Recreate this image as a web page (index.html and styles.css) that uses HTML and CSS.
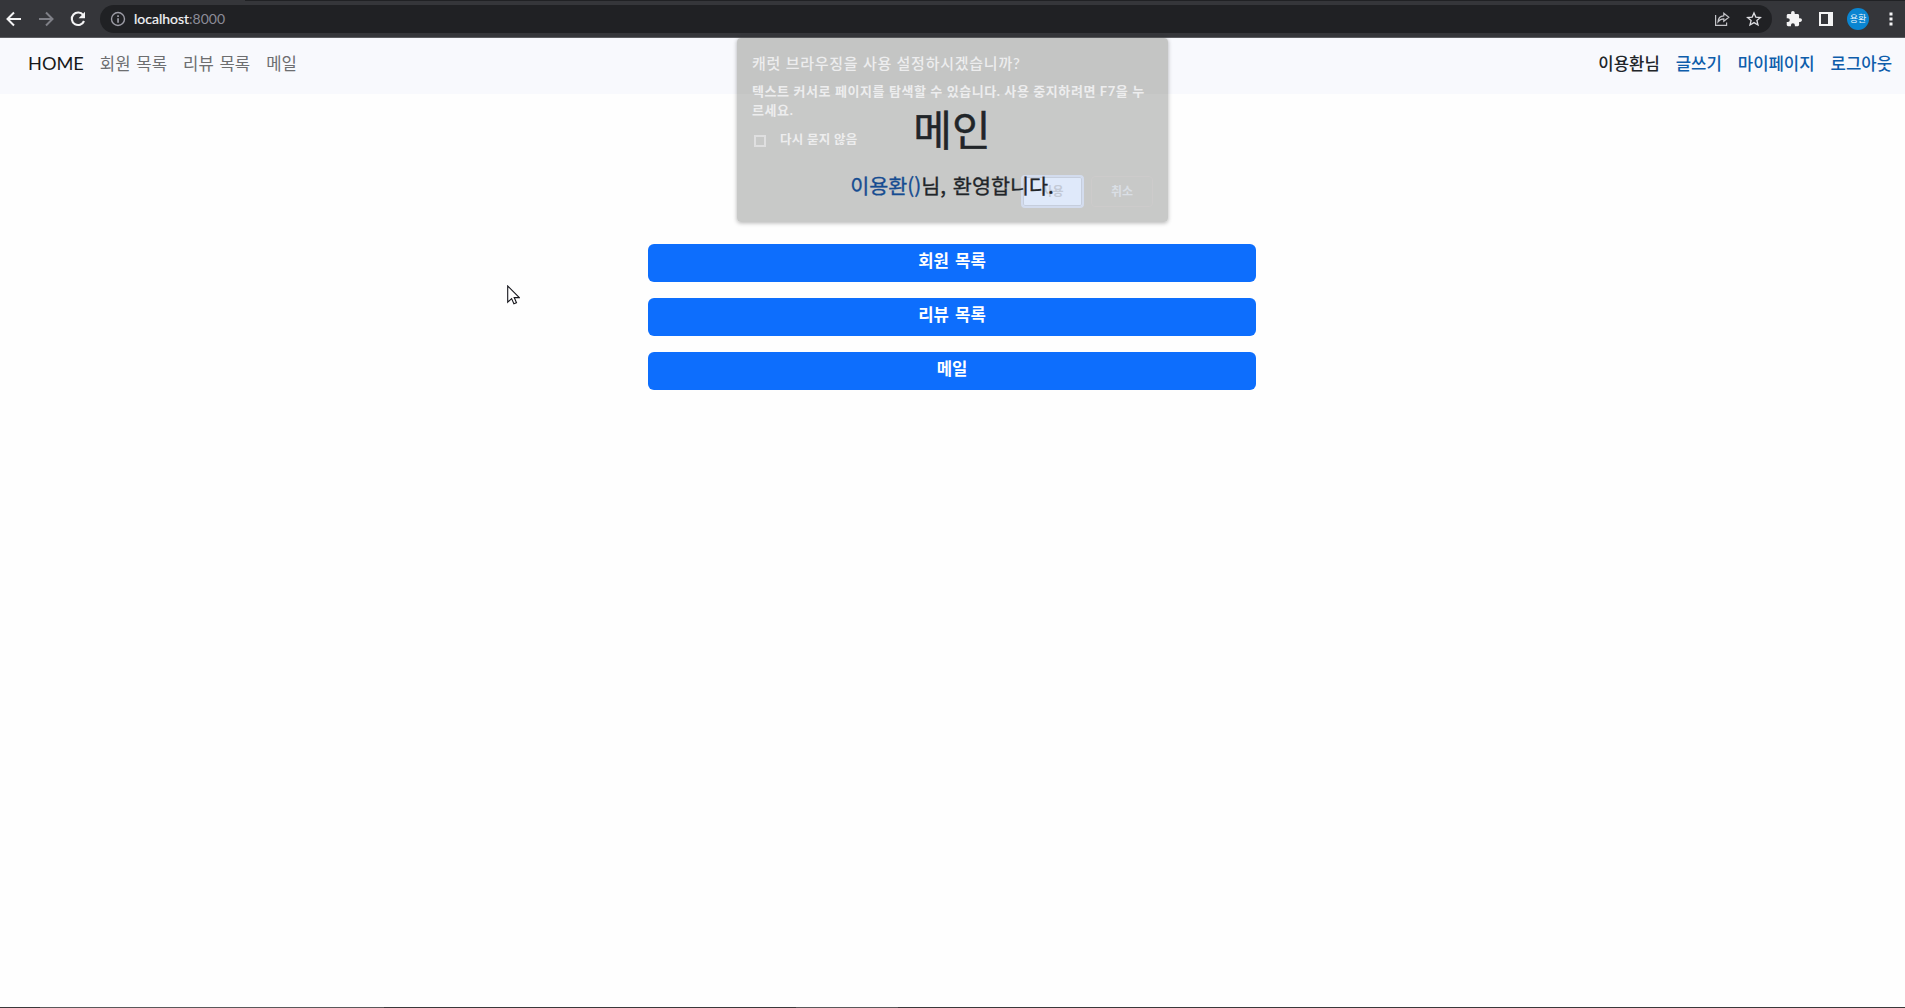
FILE: index.html
```
<!DOCTYPE html>
<html lang="ko">
<head>
<meta charset="utf-8">
<title>메인</title>
<link rel="stylesheet" href="styles.css">
</head>
<body>
<header class="browser-bar">
  <svg class="icon nav-icon" viewBox="0 0 16 16"><path d="M15 8H2M8 1.5 1.5 8 8 14.5" fill="none" stroke="#f4f4f5" stroke-width="2"/></svg>
  <svg class="icon nav-icon" viewBox="0 0 16 16"><path d="M1 8h13M8 1.5 14.5 8 8 14.5" fill="none" stroke="#7f8087" stroke-width="2"/></svg>
  <svg class="icon nav-icon" viewBox="0 0 16 16"><path d="M13.2 4A6.3 6.3 0 1 0 14 10" fill="none" stroke="#f4f4f5" stroke-width="2.1"/><path d="M15 .8v6.4H8.6z" fill="#f4f4f5"/></svg>
  <div class="address">
    <svg class="info" viewBox="0 0 16 16"><circle cx="8" cy="8" r="6.5" fill="none" stroke="#9b9ba5" stroke-width="1.4"/><path d="M7.2 4.3h1.7V6H7.2zM7.2 7.2h1.7v4.6H7.2z" fill="#9b9ba5"/></svg>
    <span class="host">localhost<span class="port">:8000</span></span>
    <svg class="share" viewBox="0 0 16 16"><path d="M1.6 4v10.400h11v-3M4 10.800C4.200 6.800 6.200 5 9.800 4.800V2.300l5 4-5 4V7.800c-2.800 0-4.400 1-5.800 3z" fill="none" stroke="#c4c4c8" stroke-width="1.2"/></svg>
    <svg class="star" viewBox="0 0 16 16"><path d="m8 1.900 1.800 4.200 4.600.4-3.500 3 1.100 4.500-4-2.400L4 14l1.100-4.500-3.500-3 4.600-.4z" fill="none" stroke="#dedee2" stroke-width="1.3"/></svg>
  </div>
  <svg class="icon puzzle" viewBox="1 1 22 22"><path fill="#f4f4f5" d="M20.5 11H19V7c0-1.1-.9-2-2-2h-4V3.5a2.5 2.5 0 0 0-5 0V5H4c-1.100 0-2 .9-2 2v3.800h1.500a2.700 2.700 0 0 1 0 5.400H2V20c0 1.100.9 2 2 2h3.800v-1.500a2.700 2.700 0 0 1 5.400 0V22H17c1.100 0 2-.9 2-2v-4h1.500a2.500 2.500 0 0 0 0-5z"/></svg>
  <svg class="icon panel" viewBox="0 0 14 14"><path fill="#f4f4f5" fill-rule="evenodd" d="M0 0h14v14H0zM2 2h7v10H2z"/></svg>
  <span class="avatar">용환</span>
  <svg class="icon dots" viewBox="0 0 4 16"><path fill="#f4f4f5" d="M.5 1.500h3v3h-3zM.5 6.500h3v3h-3zM.5 11.500h3v3h-3z"/></svg>
</header>
<nav class="navbar">
  <a class="brand">HOME</a>
  <a class="muted">회원 목록</a>
  <a class="muted">리뷰 목록</a>
  <a class="muted">메일</a>
  <div class="account">
    <span>이용환님</span>
    <a>글쓰기</a>
    <a>마이페이지</a>
    <a>로그아웃</a>
  </div>
</nav>
<main class="main">
  <h1 class="title">메인</h1>
  <p class="welcome"><a>이용환()</a>님, 환영합니다.</p>
  <div class="menu">
    <a class="button">회원 목록</a>
    <a class="button">리뷰 목록</a>
    <a class="button">메일</a>
  </div>
</main>
<footer class="edge"><i class="edge-left"></i><i class="edge-mid"></i></footer>
<section class="dialog">
  <h2 class="dialog-title">캐럿 브라우징을 사용 설정하시겠습니까?</h2>
  <p class="dialog-text">텍스트 커서로 페이지를 탐색할 수 있습니다. 사용 중지하려면 F7을 누<br>르세요.</p>
  <div class="check"><i class="box"></i><span>다시 묻지 않음</span></div>
  <div class="actions"><span class="ok">사용</span><span class="cancel">취소</span></div>
</section>
<svg class="cursor" viewBox="0 0 13 20"><path d="M.7 1v16.200l3.900-3.600 2.300 5.200 2.600-1.100-2.300-5.100h5.100z" fill="#fff" stroke="#17171d" stroke-width="1.100"/></svg>
</body>
</html>
```
FILE: styles.css
```
* { box-sizing: border-box; }
body {
  margin: 0;
  height: 1008px;
  display: flex;
  flex-direction: column;
  position: relative;
  overflow: hidden;
  background: #fefefe;
  color: #212529;
  font-family: Lato, "Noto Sans CJK KR", sans-serif;
}
h1, h2, p { margin: 0; font-weight: 400; }
svg { display: block; flex: none; }
.browser-bar {
  height: 38px;
  display: flex;
  align-items: center;
  padding: 0 12px 0 6px;
  background: linear-gradient(90deg, #35363a 245px, #202124 245px) top / 100% 1px no-repeat, #35363a;
  border-bottom: 1px solid #5b5c60;
}
.nav-icon { width: 16px; height: 16px; margin-right: 16px; }
.address {
  flex: 1;
  height: 28px;
  display: flex;
  align-items: center;
  margin-left: -2px;
  padding: 0 10px;
  border-radius: 14px;
  background: #202124;
}
.info { width: 16px; height: 16px; margin-right: 8px; }
.host { flex: 1; font-size: 14px; color: #f4f4f6; -webkit-text-stroke: .2px currentColor; }
.port { color: #8c8c98; -webkit-text-stroke: 0; }
.share { width: 16px; height: 16px; margin-right: 16px; }
.star { width: 16px; height: 16px; }
.puzzle { width: 16px; height: 16px; margin-left: 14px; }
.panel { width: 14px; height: 14px; margin-left: 17px; }
.avatar {
  width: 22px;
  height: 22px;
  margin: 0 20px 0 14px;
  border-radius: 50%;
  background: #0a85d1;
  color: #e4f2fb;
  font-size: 9px;
  line-height: 21px;
  text-align: center;
}
.dots { width: 4px; height: 16px; }
.navbar {
  height: 56px;
  display: flex;
  align-items: center;
  gap: 16px;
  padding: 0 13px 7px 28px;
  background: #f8f9fd;
  font-size: 16.7px;
  word-spacing: 1.5px;
  white-space: nowrap;
}
.brand { font-size: 18.2px; color: #17181a; }
.muted { color: #6d6e70; }
.account { display: flex; gap: 16px; margin-left: auto; font-weight: 500; }
.account a { color: #0e5dab; }
.main {
  flex: 1;
  display: flex;
  flex-direction: column;
  align-items: center;
  padding-right: 1px;
}
.title {
  position: relative;
  z-index: 2;
  margin-top: 10px;
  font-family: "Noto Sans CJK KR", sans-serif;
  font-size: 42px;
  font-weight: 400;
  line-height: 48px;
  -webkit-text-stroke: .5px #212529;
}
.welcome {
  position: relative;
  z-index: 2;
  margin-top: 19px;
  font-family: "Noto Sans CJK KR", sans-serif;
  font-size: 20.7px;
  font-weight: 400;
  line-height: 28px;
  word-spacing: 1px;
  -webkit-text-stroke: .35px currentColor;
}
.welcome a { color: #164c91; }
.menu { width: 608px; display: grid; gap: 16px; margin-top: 45px; }
.button {
  height: 38px;
  border-radius: 6px;
  background: #0d6efd;
  color: #fff;
  font-size: 16.7px;
  font-weight: 700;
  line-height: 34px;
  word-spacing: 2px;
  text-align: center;
}
.edge { height: 1px; display: flex; background: #3b393b; }
.edge-left { width: 344px; margin-left: 40px; background: #5b595b; }
.edge-mid { width: 102px; margin-left: 412px; background: #5b595b; }
.dialog {
  position: absolute;
  z-index: 1;
  left: 737px;
  top: 38px;
  width: 431px;
  height: 184px;
  padding: 14px 15px;
  border-radius: 4px;
  background: linear-gradient(#c4c5c4 56px, #c8c9c8 56px);
  box-shadow: 0 1px 4px rgba(0, 0, 0, .3);
  color: #ededee;
  white-space: nowrap;
}
.dialog-title { font-size: 15px; font-weight: 500; line-height: 23px; letter-spacing: .75px; }
.dialog-text { margin-top: 7px; font-size: 13px; font-weight: 700; line-height: 19px; letter-spacing: .6px; }
.check { display: flex; align-items: center; margin-top: 10px; font-size: 12.5px; font-weight: 700; line-height: 20px; letter-spacing: .3px; }
.box { width: 12px; height: 12px; margin: 1px 14px 0 2px; border: 2px solid #dfdfe0; }
.actions { display: flex; justify-content: flex-end; align-items: center; gap: 7px; margin-top: 25px; font-size: 12px; font-weight: 700; text-align: center; }
.ok { width: 63px; height: 33px; border: 2px solid #d3dcee; border-radius: 4px; background: #dfe9fa; box-shadow: inset 0 0 0 1px #c6cedd; color: #c3cad6; line-height: 29px; }
.cancel { width: 62px; height: 31px; border: 1px solid #cdcbcb; border-radius: 4px; color: #dadfe5; line-height: 29px; }
.cursor { position: absolute; left: 507px; top: 285px; width: 13px; height: 20px; }
```
